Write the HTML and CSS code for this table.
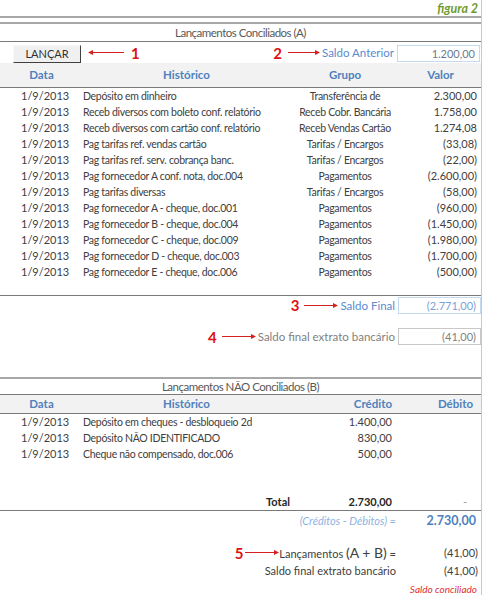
FILE: index.html
```html
<!DOCTYPE html>
<html lang="pt">
<head>
<meta charset="utf-8">
<link rel="stylesheet" href="styles.css">
</head>
<body>
<div class="sheet">
  <div class="fig">figura 2</div>
  <div class="rule2"></div>
  <div class="rule2 second"></div>
  <div class="title title-a">Lançamentos Conciliados (A)</div>

  <div class="toolbar">
    <button class="btn">LANÇAR</button>
    <svg class="arrow arrow-left" width="36" height="7" viewBox="0 0 36 7"><path d="M4 3.5H36" stroke="#d42020" stroke-width="1"/><path d="M0 3.5L5 1V6Z" fill="#d42020"/></svg>
    <span class="num num-1">1</span>
    <span class="spacer"></span>
    <span class="num">2</span>
    <svg class="arrow arrow-r2" width="32" height="7" viewBox="0 0 32 7"><path d="M0 3.5H28" stroke="#d42020" stroke-width="1"/><path d="M32 3.5L27 1V6Z" fill="#d42020"/></svg>
    <span class="lbl-blue">Saldo Anterior</span>
    <span class="box box-blue">1.200,00</span>
  </div>

  <div class="grid-a thead">
    <span class="c-date">Data</span>
    <span class="c-hist">Histórico</span>
    <span class="c-grp">Grupo</span>
    <span class="c-val">Valor</span>
  </div>

  <div class="tbody-a">
    <div class="grid-a row"><span class="c-date">1/9/2013</span><span class="c-hist">Depósito em dinheiro</span><span class="c-grp">Transferência de</span><span class="c-val">2.300,00</span></div>
    <div class="grid-a row"><span class="c-date">1/9/2013</span><span class="c-hist">Receb diversos com boleto conf. relatório</span><span class="c-grp">Receb Cobr. Bancária</span><span class="c-val">1.758,00</span></div>
    <div class="grid-a row"><span class="c-date">1/9/2013</span><span class="c-hist">Receb diversos com cartão conf. relatório</span><span class="c-grp">Receb Vendas Cartão</span><span class="c-val">1.274,08</span></div>
    <div class="grid-a row"><span class="c-date">1/9/2013</span><span class="c-hist">Pag tarifas ref. vendas cartão</span><span class="c-grp">Tarifas / Encargos</span><span class="c-val">(33,08)</span></div>
    <div class="grid-a row"><span class="c-date">1/9/2013</span><span class="c-hist">Pag tarifas ref. serv. cobrança banc.</span><span class="c-grp">Tarifas / Encargos</span><span class="c-val">(22,00)</span></div>
    <div class="grid-a row"><span class="c-date">1/9/2013</span><span class="c-hist">Pag fornecedor A conf. nota, doc.004</span><span class="c-grp">Pagamentos</span><span class="c-val">(2.600,00)</span></div>
    <div class="grid-a row"><span class="c-date">1/9/2013</span><span class="c-hist">Pag tarifas diversas</span><span class="c-grp">Tarifas / Encargos</span><span class="c-val">(58,00)</span></div>
    <div class="grid-a row"><span class="c-date">1/9/2013</span><span class="c-hist">Pag fornecedor A - cheque, doc.001</span><span class="c-grp">Pagamentos</span><span class="c-val">(960,00)</span></div>
    <div class="grid-a row"><span class="c-date">1/9/2013</span><span class="c-hist">Pag fornecedor B - cheque, doc.004</span><span class="c-grp">Pagamentos</span><span class="c-val">(1.450,00)</span></div>
    <div class="grid-a row"><span class="c-date">1/9/2013</span><span class="c-hist">Pag fornecedor C - cheque, doc.009</span><span class="c-grp">Pagamentos</span><span class="c-val">(1.980,00)</span></div>
    <div class="grid-a row"><span class="c-date">1/9/2013</span><span class="c-hist">Pag fornecedor D - cheque, doc.003</span><span class="c-grp">Pagamentos</span><span class="c-val">(1.700,00)</span></div>
    <div class="grid-a row"><span class="c-date">1/9/2013</span><span class="c-hist">Pag fornecedor E - cheque, doc.006</span><span class="c-grp">Pagamentos</span><span class="c-val">(500,00)</span></div>
  </div>

  <div class="sum sum-final">
    <span class="num">3</span>
    <svg class="arrow" width="34" height="7" viewBox="0 0 34 7"><path d="M0 3.5H30" stroke="#d42020" stroke-width="1"/><path d="M34 3.5L29 1V6Z" fill="#d42020"/></svg>
    <span class="lbl-blue">Saldo Final</span>
    <span class="box box-blue val-blue">(2.771,00)</span>
  </div>

  <div class="sum sum-extrato">
    <span class="num">4</span>
    <svg class="arrow" width="34" height="7" viewBox="0 0 34 7"><path d="M0 3.5H30" stroke="#d42020" stroke-width="1"/><path d="M34 3.5L29 1V6Z" fill="#d42020"/></svg>
    <span class="lbl-gray">Saldo final extrato bancário</span>
    <span class="box box-gray">(41,00)</span>
  </div>

  <div class="thick"></div>
  <div class="title title-b">Lançamentos NÃO Conciliados (B)</div>

  <div class="grid-b thead thead-b">
    <span class="c-date">Data</span>
    <span class="c-hist">Histórico</span>
    <span class="c-cred">Crédito</span>
    <span class="c-deb">Débito</span>
  </div>

  <div class="tbody-b">
    <div class="grid-b row"><span class="c-date">1/9/2013</span><span class="c-hist">Depósito em cheques - desbloqueio 2d</span><span class="c-cred">1.400,00</span><span class="c-deb"></span></div>
    <div class="grid-b row"><span class="c-date">1/9/2013</span><span class="c-hist">Depósito NÃO IDENTIFICADO</span><span class="c-cred">830,00</span><span class="c-deb"></span></div>
    <div class="grid-b row"><span class="c-date">1/9/2013</span><span class="c-hist">Cheque não compensado, doc.006</span><span class="c-cred">500,00</span><span class="c-deb"></span></div>
  </div>

  <div class="grid-b row total">
    <span class="c-date"></span>
    <span class="c-total">Total</span>
    <span class="c-cred">2.730,00</span>
    <span class="c-deb dash">-</span>
  </div>

  <div class="res res-cd">
    <span class="res-lbl cd-lbl">(Créditos - Débitos) =</span>
    <span class="res-val cd-val">2.730,00</span>
  </div>

  <div class="res res-ab">
    <span class="num">5</span>
    <svg class="arrow" width="34" height="7" viewBox="0 0 34 7"><path d="M0 3.5H30" stroke="#d42020" stroke-width="1"/><path d="M34 3.5L29 1V6Z" fill="#d42020"/></svg>
    <span class="res-lbl">Lançamentos <span class="big">(A + B)</span> =</span>
    <span class="res-val">(41,00)</span>
  </div>

  <div class="res res-sf">
    <span class="res-lbl">Saldo final extrato bancário</span>
    <span class="res-val">(41,00)</span>
  </div>

  <div class="conc">Saldo conciliado</div>
</div>
</body>
</html>
```

FILE: styles.css
```css
* { box-sizing: border-box; }
html, body { margin: 0; padding: 0; background: #ffffff; }
body {
  font-family: Lato, "Open Sans", sans-serif;
  font-size: 11px;
  color: #404040;
}
.sheet {
  width: 482px;
  height: 595px;
  border-right: 1px solid #c8c8c8;
  overflow: hidden;
}
.fig {
  height: 16px;
  line-height: 18px;
  text-align: right;
  padding-right: 3px;
  font-weight: bold;
  font-style: italic;
  font-size: 12.5px;
  color: #6e9b2e;
}
.rule2 {
  height: 2px;
  background: #a8a8a8;
}
.rule2.second { margin-top: 4px; }
.title {
  text-align: center;
  color: #595959;
  font-size: 11.5px;
  letter-spacing: -0.5px;
  border-bottom: 1px solid #7a7a7a;
}
.title-a { height: 18px; line-height: 18px; }
.title-b { height: 16px; line-height: 16px; }

.toolbar {
  height: 21px;
  display: flex;
  align-items: center;
}
.btn {
  margin-left: 13px;
  margin-top: 2px;
  width: 68px;
  height: 18px;
  padding: 0;
  font-family: Lato, sans-serif;
  font-size: 11px;
  color: #303030;
  background: #f0f0f0;
  border: 1px solid #f8f8f8;
  border-right: 1px solid #404040;
  border-bottom: 1px solid #404040;
  border-radius: 0;
}
.arrow { display: block; flex: none; }
.arrow-left { margin-left: 7px; }
.num {
  color: #e01010;
  font-weight: bold;
  font-size: 15px;
  line-height: 16px;
  margin-right: 6px;
}
.num-1 { margin-left: 7px; }
.spacer { flex: 1; }
.lbl-blue { color: #5a8ad0; font-size: 11.5px; margin-left: 2px; }
.lbl-gray { color: #7f7f7f; font-size: 11.5px; margin-left: 2px; }
.box {
  width: 83px;
  height: 17px;
  margin-left: 3px;
  text-align: right;
  padding-right: 4px;
  line-height: 15px;
  flex: none;
}
.box-blue { border: 1px solid #c5d9f1; color: #6b7b8f; }
.box-gray { border: 1px solid #c8c8c8; color: #7f7f7f; }
.toolbar .box { margin-right: 1px; margin-top: 2px; }
.val-blue { color: #7b9fd8; }

.thead {
  background: #f2f2f2;
  color: #4f81bd;
  font-weight: bold;
  font-size: 11.5px;
  border-bottom: 1px solid #7a7a7a;
}
.grid-a {
  display: grid;
  grid-template-columns: 83px 207px 110px 81px;
}
.grid-a.thead { height: 25px; line-height: 24px; }
.grid-a.thead .c-date,
.grid-a.thead .c-hist,
.grid-a.thead .c-grp,
.grid-a.thead .c-val { text-align: center; padding: 0; letter-spacing: 0; }
.row { height: 16px; line-height: 16px; white-space: nowrap; }
.row .c-hist, .row .c-grp { letter-spacing: -0.3px; font-size: 10.5px; }
.c-date { padding-left: 21px; }
.c-grp { text-align: center; }
.c-val { text-align: right; padding-right: 4px; }
.tbody-a { height: 208px; border-bottom: 1px solid #7a7a7a; }

.sum {
  display: flex;
  justify-content: flex-end;
  align-items: center;
}
.sum-final { height: 16px; margin-top: 1px; }
.sum-final .num { margin-right: 5px; }
.sum-extrato { height: 17px; margin-top: 15px; }
.sum-extrato .num { margin-right: 5px; }

.thick { height: 2px; background: #a8a8a8; margin-top: 32px; }

.grid-b {
  display: grid;
  grid-template-columns: 83px 247px 70px 81px;
}
.thead-b { height: 19px; line-height: 18px; }
.thead-b .c-date { text-align: center; padding: 0; }
.thead-b .c-hist { text-align: center; padding-right: 40px; }
.c-cred { text-align: right; padding-right: 8px; }
.c-deb { text-align: right; padding-right: 8px; }
.tbody-b { height: 80px; }
.total {
  height: 17px;
  border-bottom: 1px solid #7a7a7a;
  font-weight: bold;
  color: #262626;
}
.row.total .c-total { text-align: right; padding-right: 40px; letter-spacing: 0; }
.dash { font-weight: normal; color: #a0a0a0; padding-right: 14px; }

.res {
  display: flex;
  justify-content: flex-end;
  align-items: center;
  height: 17px;
}
.res-lbl { text-align: right; }
.res-val { width: 85px; text-align: right; padding-right: 3px; }
.res-cd { height: 18px; }
.cd-lbl { font-style: italic; color: #8db3e2; }
.cd-val { font-weight: bold; color: #4f81bd; font-size: 12.5px; padding-right: 5px; }
.res-ab { margin-top: 15px; }
.res-ab .num { margin-right: 2px; }
.big { font-size: 14px; }
.res-sf { margin-top: 1px; }
.conc {
  text-align: right;
  padding-right: 4px;
  color: #e03030;
  font-style: italic;
  font-size: 10px;
  height: 16px;
  line-height: 16px;
  margin-top: 2px;
}
```
